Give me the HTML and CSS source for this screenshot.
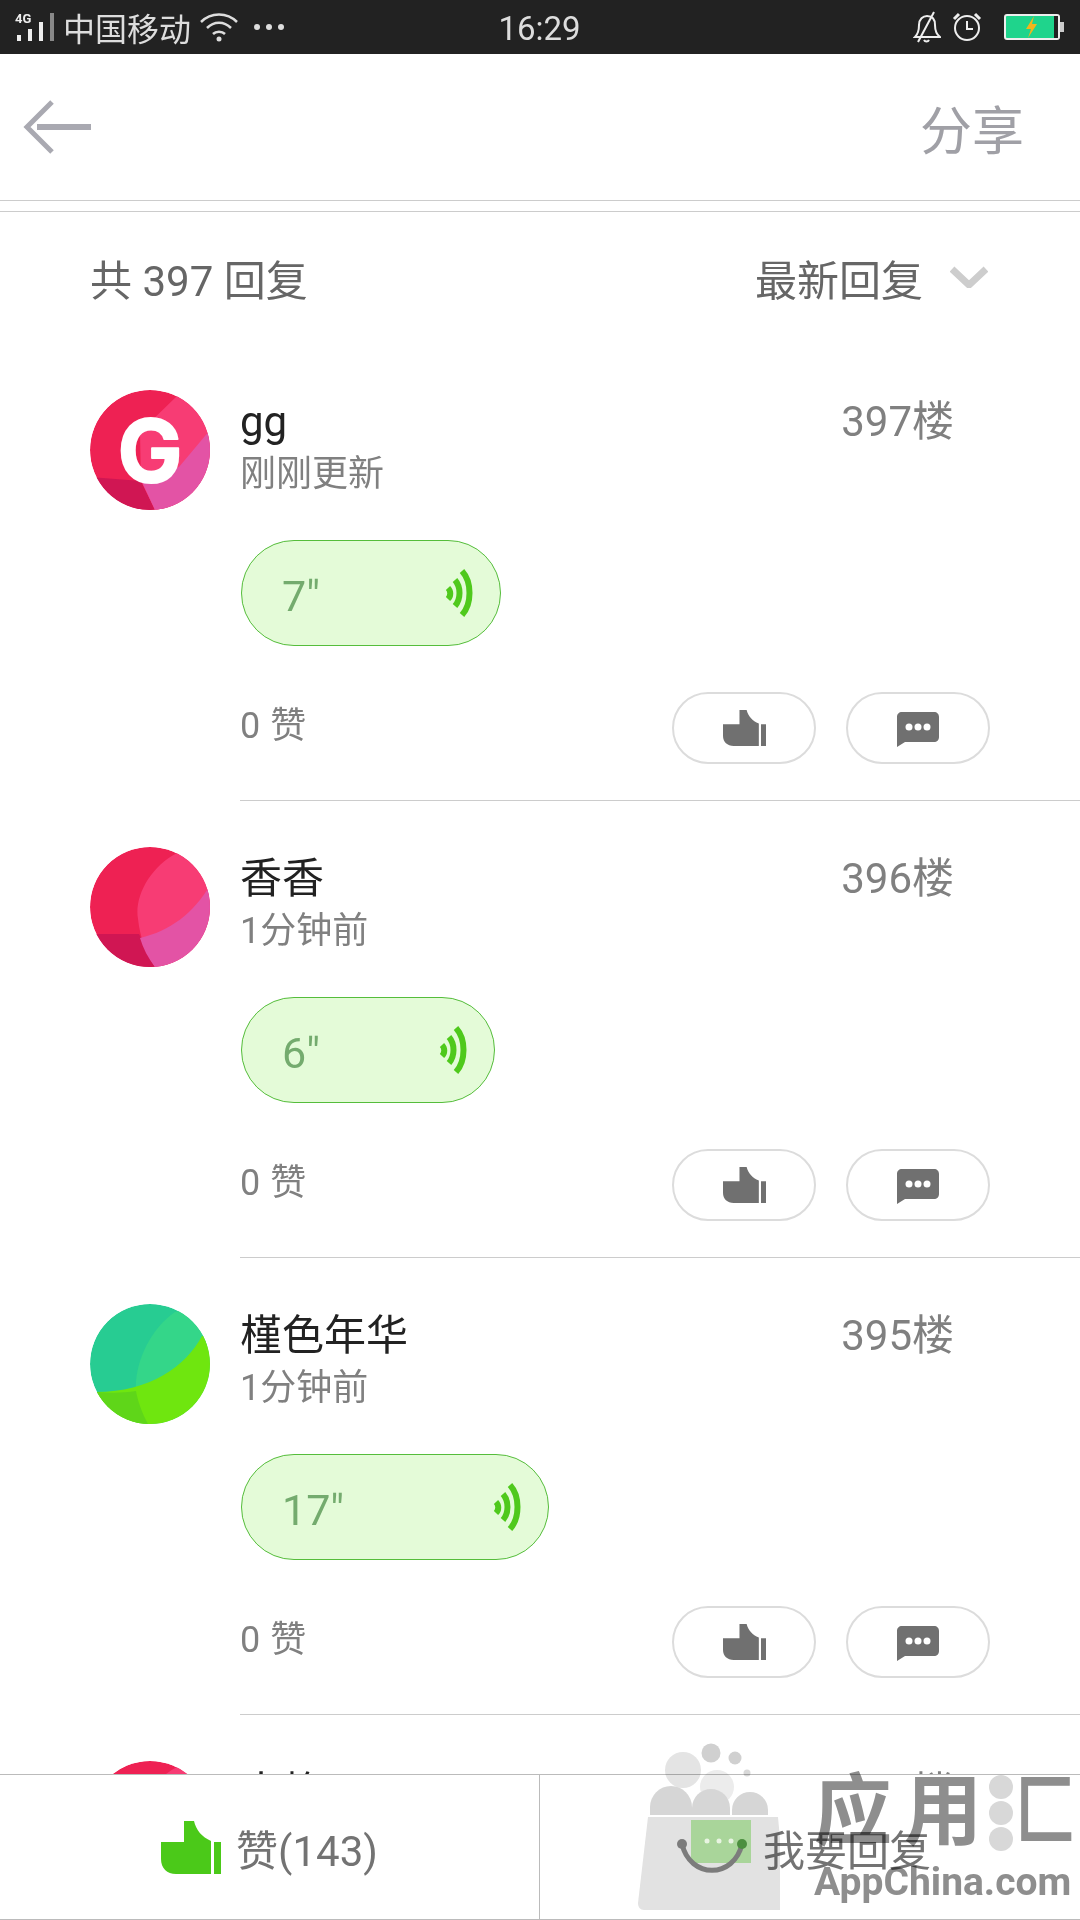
FILE: index.html
```html
<!DOCTYPE html>
<html lang="zh-CN">
<head>
    <meta charset="UTF-8">
    <meta name="viewport" content="width=device-width, initial-scale=1.0">
    <title>回复</title>
    <link rel="stylesheet" href="styles.css">
</head>
<body>
    <!-- shared icons -->
    <svg class="defs" xmlns="http://www.w3.org/2000/svg">
        <symbol id="icon-thumb" viewBox="0 0 60 53" preserveAspectRatio="none">
            <path d="M0 21H23V0H33C35 9 41 16 50 20V53H15C6 53 0 47 0 38Z" fill="currentColor"></path>
            <rect x="53" y="21" width="7" height="32" fill="currentColor"></rect>
        </symbol>
        <symbol id="icon-chat" viewBox="0 0 42 35">
            <path d="M5 0H37C40 0 42 2 42 5V25C42 28 40 30 37 30H8L0 35V5C0 2 2 0 5 0Z" fill="currentColor"></path>
            <circle cx="12" cy="15" r="3.5" fill="#fff"></circle>
            <circle cx="21" cy="15" r="3.5" fill="#fff"></circle>
            <circle cx="30" cy="15" r="3.5" fill="#fff"></circle>
        </symbol>
        <symbol id="icon-wave" viewBox="0 0 28 50">
            <g fill="none" stroke="#4fc91c" stroke-width="6">
                <path d="M3 20C6 23 6 28 3 31"></path>
                <path d="M10 12C16 19 16 31 10 38"></path>
                <path d="M17 3C27 14 27 36 17 47"></path>
            </g>
        </symbol>
        <symbol id="avatar-letter" viewBox="0 0 120 120">
            <circle cx="60" cy="60" r="60" fill="#ee2153"></circle>
            <path d="M0 87L51 91L66 122H10Z" fill="#d01653"></path>
            <path d="M87 6L50 42L51 91L65 120H125V0H87Z" fill="#f73c74"></path>
            <path d="M120 40L89 77L52 92L65 120H125V40Z" fill="#e353a5"></path>
        </symbol>
        <symbol id="avatar-pink" viewBox="0 0 120 120">
            <circle cx="60" cy="60" r="60" fill="#ee2153"></circle>
            <path d="M0 87H49L66 122H10Z" fill="#d01653"></path>
            <path d="M87 6C60 20 44 50 48 72C50 90 56 106 65 120H125V0H87Z" fill="#f73c74"></path>
            <path d="M120 38C104 66 80 84 50 91C53 101 58 111 65 120H125V38Z" fill="#e353a5"></path>
        </symbol>
        <symbol id="avatar-green" viewBox="0 0 120 120">
            <circle cx="60" cy="60" r="60" fill="#27cc92"></circle>
            <path d="M85 8C60 25 44 60 46 87L100 70L125 30V0Z" fill="#34d689"></path>
            <path d="M112 32C96 62 60 88 6 88L30 125H125V32Z" fill="#6fe60f"></path>
            <path d="M6 88C20 89 34 89 46 87C48 98 52 109 59 122H20Z" fill="#5fd619"></path>
        </symbol>
    </svg>

    <div class="status-bar">
        <div class="status-left">
            <svg class="signal" viewBox="0 0 40 30">
                <text x="0" y="11" class="signal-label">4G</text>
                <rect x="2" y="23" width="4" height="6" fill="#eee"></rect>
                <rect x="13" y="17" width="4" height="12" fill="#eee"></rect>
                <rect x="24" y="10" width="4" height="19" fill="#eee"></rect>
                <rect x="35" y="1" width="4" height="28" fill="#888"></rect>
            </svg>
            <span class="carrier">中国移动</span>
            <svg class="wifi" viewBox="0 0 38 30" fill="none" stroke="#ddd" stroke-width="2.5">
                <path d="M1 10C11 0 27 0 37 10"></path>
                <path d="M7 16C14 9 24 9 31 16"></path>
                <path d="M13 22C16 19 22 19 25 22"></path>
                <circle cx="19" cy="27" r="2.5" fill="#ddd" stroke="none"></circle>
            </svg>
            <span class="dots"><i></i><i></i><i></i></span>
        </div>
        <div class="status-time">16:29</div>
        <div class="status-right">
            <svg class="bell" viewBox="0 0 28 32" fill="none" stroke="#eee" stroke-width="2">
                <path d="M2 26C6 22 6 18 6 14C6 8 10 5 14 5C19 5 22 8 22 14C22 18 23 23 27 26Z"></path>
                <path d="M11 29C12 31 15 31 16 29"></path>
                <path d="M21 1L5 31"></path>
            </svg>
            <svg class="alarm" viewBox="0 0 30 30" fill="none" stroke="#eee" stroke-width="2">
                <circle cx="15" cy="16" r="12"></circle>
                <path d="M15 9V17H21"></path>
                <path d="M2 7L7 2M23 2L28 7" stroke-width="3"></path>
            </svg>
            <svg class="battery" viewBox="0 0 60 26">
                <rect x="1" y="1" width="54" height="24" rx="2" fill="#1fd48c" stroke="#eee" stroke-width="2"></rect>
                <rect x="50" y="2" width="4" height="22" fill="#222"></rect>
                <rect x="56" y="8" width="4" height="10" fill="#ccc"></rect>
                <path d="M30 2L22 15H27L24 24L33 10H28Z" fill="#f2b51c"></path>
            </svg>
        </div>
    </div>

    <div class="toolbar">
        <svg class="back-icon" viewBox="0 0 68 54" fill="none" stroke="#a9a9b1">
            <path d="M29 2L4 27L29 52" stroke-width="5"></path>
            <path d="M14 27H68" stroke-width="6"></path>
        </svg>
        <span class="share">分享</span>
    </div>

    <div class="content">
        <div class="list-header">
            <span>共 397 回复</span>
            <div class="sort">
                <span>最新回复</span>
                <svg class="chevron" viewBox="0 0 38 22" fill="none" stroke="#cdcdcd" stroke-width="7">
                    <path d="M2 3L19 19L36 3"></path>
                </svg>
            </div>
        </div>

        <div class="reply">
            <div class="avatar">
                <svg viewBox="0 0 120 120"><use href="#avatar-letter"></use><text x="60" y="92" class="avatar-letter">G</text></svg>
            </div>
            <div class="reply-body">
                <div class="reply-head">
                    <div>
                        <div class="name">gg</div>
                        <div class="time">刚刚更新</div>
                    </div>
                    <span class="floor">397楼</span>
                </div>
                <div class="voice voice-7">
                    <span>7"</span>
                    <svg class="wave"><use href="#icon-wave"></use></svg>
                </div>
                <div class="reply-meta">
                    <span class="likes">0 赞</span>
                    <div class="actions">
                        <div class="action"><svg class="thumb-small"><use href="#icon-thumb"></use></svg></div>
                        <div class="action"><svg class="chat-small"><use href="#icon-chat"></use></svg></div>
                    </div>
                </div>
            </div>
        </div>

        <div class="reply">
            <div class="avatar">
                <svg viewBox="0 0 120 120"><use href="#avatar-pink"></use></svg>
            </div>
            <div class="reply-body">
                <div class="reply-head">
                    <div>
                        <div class="name">香香</div>
                        <div class="time">1分钟前</div>
                    </div>
                    <span class="floor">396楼</span>
                </div>
                <div class="voice voice-6">
                    <span>6"</span>
                    <svg class="wave"><use href="#icon-wave"></use></svg>
                </div>
                <div class="reply-meta">
                    <span class="likes">0 赞</span>
                    <div class="actions">
                        <div class="action"><svg class="thumb-small"><use href="#icon-thumb"></use></svg></div>
                        <div class="action"><svg class="chat-small"><use href="#icon-chat"></use></svg></div>
                    </div>
                </div>
            </div>
        </div>

        <div class="reply">
            <div class="avatar">
                <svg viewBox="0 0 120 120"><use href="#avatar-green"></use></svg>
            </div>
            <div class="reply-body">
                <div class="reply-head">
                    <div>
                        <div class="name">槿色年华</div>
                        <div class="time">1分钟前</div>
                    </div>
                    <span class="floor">395楼</span>
                </div>
                <div class="voice voice-17">
                    <span>17"</span>
                    <svg class="wave"><use href="#icon-wave"></use></svg>
                </div>
                <div class="reply-meta">
                    <span class="likes">0 赞</span>
                    <div class="actions">
                        <div class="action"><svg class="thumb-small"><use href="#icon-thumb"></use></svg></div>
                        <div class="action"><svg class="chat-small"><use href="#icon-chat"></use></svg></div>
                    </div>
                </div>
            </div>
        </div>

        <div class="reply">
            <div class="avatar">
                <svg viewBox="0 0 120 120"><use href="#avatar-pink"></use></svg>
            </div>
            <div class="reply-body">
                <div class="reply-head">
                    <div>
                        <div class="name">大格</div>
                    </div>
                    <span class="floor">394楼</span>
                </div>
            </div>
        </div>
    </div>

    <div class="bottom-bar">
        <div class="bottom-like">
            <svg class="thumb-big"><use href="#icon-thumb"></use></svg>
            <span>赞(143)</span>
        </div>
        <div class="bottom-reply">我要回复</div>
    </div>

    <!-- site watermark lying over the screenshot -->
    <div class="watermark">
        <svg class="wm-bag" viewBox="0 0 160 180">
            <circle cx="63" cy="33" r="18" fill="#e4e4e4"></circle>
            <circle cx="97" cy="50" r="17" fill="#ececec"></circle>
            <circle cx="91" cy="16" r="9.5" fill="#d0d0d0"></circle>
            <circle cx="115" cy="21" r="6.5" fill="#d0d0d0"></circle>
            <circle cx="127" cy="36" r="3.5" fill="#d8d8d8"></circle>
            <path d="M30 78V70A21 21 0 0 1 72 70V78Z" fill="#d6d6d6"></path>
            <path d="M72 78V71A19 19 0 0 1 110 71V78Z" fill="#d6d6d6"></path>
            <path d="M112 78V73A18 18 0 0 1 148 73V78Z" fill="#d6d6d6"></path>
            <path d="M28 80H158L166 166C166 170 164 173 160 173H24C20 173 18 170 18 166Z" fill="#e2e2e2"></path>
            <rect x="71" y="83" width="60" height="43" fill="#a9d59a"></rect>
            <circle cx="87" cy="104" r="2.5" fill="#e8f4e2"></circle>
            <circle cx="99" cy="104" r="2.5" fill="#e8f4e2"></circle>
            <circle cx="111" cy="104" r="2.5" fill="#e8f4e2"></circle>
            <path d="M62 107C70 142 114 142 122 107" fill="none" stroke="#7c7c7c" stroke-width="5"></path>
            <circle cx="62" cy="107" r="5" fill="#7c7c7c"></circle>
            <circle cx="122" cy="107" r="5" fill="#4c8f3f"></circle>
        </svg>
        <div class="wm-text">
            <div class="wm-title">
                <span class="wm-name">应用</span>
                <span class="wm-dots"><i></i><i></i><i></i></span>
                <span class="wm-last">匚</span>
            </div>
            <div class="wm-site">AppChina.com</div>
        </div>
    </div>
</body>
</html>
```

FILE: styles.css
```css
* {
    margin: 0;
    padding: 0;
    box-sizing: border-box;
    font-family: Roboto, 'Noto Sans CJK SC', sans-serif;
}

body {
    position: relative;
    display: flex;
    flex-direction: column;
    width: 1080px;
    height: 1920px;
    overflow: hidden;
    background-color: #fff;
}

.defs {
    position: absolute;
    width: 0;
    height: 0;
}

/* status bar */
.status-bar {
    display: grid;
    grid-template-columns: 1fr auto 1fr;
    align-items: center;
    height: 54px;
    flex: none;
    padding: 0 16px 0 15px;
    background-color: #222;
    color: #ddd;
}

.status-left {
    display: flex;
    align-items: center;
}

.signal {
    width: 40px;
    height: 30px;
}

.signal-label {
    font-size: 13px;
    font-weight: 700;
    fill: #eee;
}

.carrier {
    margin-left: 8px;
    font-size: 32px;
}

.wifi {
    width: 38px;
    height: 30px;
    margin-left: 9px;
}

.dots {
    display: flex;
    gap: 6px;
    margin-left: 16px;
}

.dots i {
    width: 6px;
    height: 6px;
    border-radius: 50%;
    background-color: #ddd;
}

.status-time {
    margin-top: 3px;
    font-size: 33px;
}

.status-right {
    display: flex;
    align-items: center;
    justify-content: flex-end;
}

.bell {
    width: 28px;
    height: 32px;
}

.alarm {
    width: 30px;
    height: 30px;
    margin-left: 11px;
}

.battery {
    width: 60px;
    height: 26px;
    margin-left: 22px;
}

/* toolbar */
.toolbar {
    display: flex;
    align-items: center;
    justify-content: space-between;
    flex: none;
    height: 147px;
    padding: 0 56px 0 23px;
    border-bottom: 1px solid #ccc;
}

.back-icon {
    width: 68px;
    height: 54px;
}

.share {
    font-size: 52px;
    color: #a0a0a6;
}

/* list */
.content {
    flex: 1;
    min-height: 0;
    overflow: hidden;
    margin-top: 10px;
    border-top: 1px solid #ccc;
}

.list-header {
    display: flex;
    align-items: center;
    justify-content: space-between;
    height: 132px;
    padding: 0 92px 2px 90px;
    font-size: 42px;
    color: #666;
}

.sort {
    display: flex;
    align-items: center;
    gap: 27px;
}

.chevron {
    width: 38px;
    height: 22px;
}

.reply {
    display: flex;
    padding-left: 90px;
}

.avatar {
    flex: none;
    width: 120px;
    height: 120px;
    margin-top: 46px;
    margin-right: 30px;
    border-radius: 50%;
    overflow: hidden;
}

.avatar svg {
    display: block;
    width: 120px;
    height: 120px;
}

.avatar-letter {
    font-family: Inter, sans-serif;
    font-size: 86px;
    font-weight: 700;
    text-anchor: middle;
    fill: #fff;
    stroke: #fff;
    stroke-width: 2px;
    stroke-linejoin: round;
}

.reply-body {
    flex: 1;
    min-width: 0;
    height: 457px;
    padding-top: 53px;
    border-bottom: 1px solid #ccc;
}

.reply-head {
    display: flex;
    justify-content: space-between;
    padding-right: 126px;
}

.name {
    height: 50px;
    line-height: 50px;
    font-size: 42px;
    color: #222;
}

.time {
    height: 50px;
    margin-top: 2px;
    margin-bottom: -2px;
    line-height: 50px;
    font-size: 36px;
    color: #808080;
}

.floor {
    height: 46px;
    margin-top: 2px;
    line-height: 46px;
    font-size: 42px;
    color: #808080;
}

.voice {
    display: flex;
    align-items: center;
    justify-content: space-between;
    height: 106px;
    margin-top: 43px;
    margin-left: 1px;
    padding: 0 27px 0 40px;
    border: 1px solid #55bd3b;
    border-radius: 53px;
    background-color: #e4fbd8;
    font-size: 43px;
    color: #74ab6e;
}

.voice span {
    margin-top: 6px;
}

.voice-7 {
    width: 260px;
}

.voice-6 {
    width: 254px;
}

.voice-17 {
    width: 308px;
}

.wave {
    width: 28px;
    height: 50px;
}

.reply-meta {
    display: flex;
    align-items: center;
    justify-content: space-between;
    margin-top: 46px;
    padding-right: 90px;
}

.likes {
    margin-top: -12px;
    font-size: 36px;
    word-spacing: 1px;
    color: #808080;
}

.actions {
    display: flex;
    gap: 30px;
}

.action {
    display: flex;
    align-items: center;
    justify-content: center;
    width: 144px;
    height: 72px;
    border: 2px solid #dcdcdc;
    border-radius: 36px;
    color: #707070;
}

.thumb-small {
    width: 43px;
    height: 36px;
}

.chat-small {
    width: 42px;
    height: 35px;
    margin-top: 3px;
}

/* bottom bar */
.bottom-bar {
    display: flex;
    flex: none;
    height: 146px;
    background-color: #fff;
    border-top: 1px solid #bbb;
    border-bottom: 1px solid #bbb;
    font-size: 42px;
    color: #737373;
}

.bottom-like {
    display: flex;
    align-items: center;
    justify-content: center;
    gap: 15px;
    width: 540px;
    border-right: 1px solid #bbb;
}

.thumb-big {
    width: 60px;
    height: 53px;
    color: #4bc919;
}

.bottom-reply {
    flex: 1;
    display: flex;
    align-items: center;
    padding-left: 223px;
}

/* watermark */
.watermark {
    position: absolute;
    left: 620px;
    top: 1737px;
    display: flex;
    mix-blend-mode: multiply;
}

.wm-bag {
    display: block;
    width: 160px;
    height: 180px;
}

.wm-text {
    margin-left: 34px;
    padding-top: 31px;
    color: #8e8e8e;
}

.wm-title {
    display: flex;
    align-items: center;
    height: 90px;
    font-size: 78px;
    font-weight: 700;
    line-height: 90px;
    white-space: nowrap;
}

.wm-name {
    letter-spacing: 12px;
}

.wm-dots {
    display: flex;
    flex-direction: column;
    gap: 2px;
    margin-left: -5px;
    margin-right: 2px;
}

.wm-dots i {
    width: 24px;
    height: 24px;
    border-radius: 50%;
    background-color: #d8d8d8;
}

.wm-last {
    display: block;
    width: 50px;
    transform: scaleX(0.78);
    transform-origin: left center;
}

.wm-site {
    margin-top: 6px;
    font-size: 39px;
    font-weight: 700;
    line-height: 36px;
    white-space: nowrap;
}
```
